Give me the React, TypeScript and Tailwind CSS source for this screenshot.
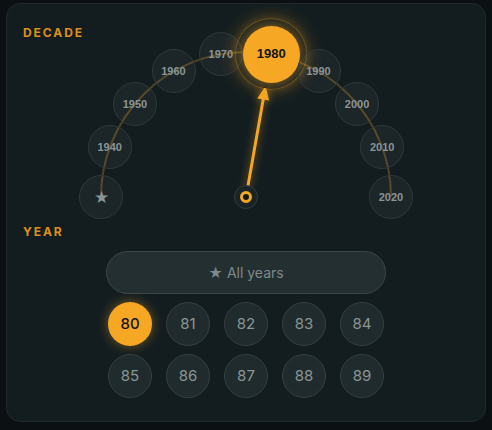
import React from 'react';

const decades = ['★', '1940', '1950', '1960', '1970', '1980', '1990', '2000', '2010', '2020'];
const years = ['80', '81', '82', '83', '84', '85', '86', '87', '88', '89'];

// dial geometry (px, relative to the dial box)
const CX = 240;
const CY = 182;
const R = 145;

function nodePos(i: number) {
  const a = ((180 - i * 20) * Math.PI) / 180;
  return { x: CX + R * Math.cos(a), y: CY - R * Math.sin(a) };
}

function Needle() {
  const a = (80 * Math.PI) / 180;
  const dx = Math.cos(a);
  const dy = -Math.sin(a);
  const px = -dy;
  const py = dx;
  const tip = { x: CX + dx * 113, y: CY + dy * 113 };
  const base = { x: CX + dx * 99, y: CY + dy * 99 };
  const b1 = { x: base.x + px * 6, y: base.y + py * 6 };
  const b2 = { x: base.x - px * 6, y: base.y - py * 6 };
  return (
    <svg className="absolute inset-0 pointer-events-none" width={480} height={207}>
      <path
        d={`M ${CX - R} ${CY} A ${R} ${R} 0 0 1 ${CX + R} ${CY}`}
        fill="none"
        stroke="rgba(245,166,35,0.28)"
        strokeWidth={2}
      />
      <g style={{ filter: 'drop-shadow(0 0 4px rgba(245,166,35,0.6))' }}>
        <line
          x1={CX + dx * 10}
          y1={CY + dy * 10}
          x2={base.x + dx * 1}
          y2={base.y + dy * 1}
          stroke="#f5a623"
          strokeWidth={3}
          strokeLinecap="round"
        />
        <polygon points={`${tip.x},${tip.y} ${b1.x},${b1.y} ${b2.x},${b2.y}`} fill="#f5a623" />
      </g>
      <circle cx={tip.x} cy={tip.y} r={2.5} fill="#1b1b1b" />
    </svg>
  );
}

export default function App() {
  return (
    <div className="min-h-[430px] w-[492px] bg-[#0b1012] pt-[3px] pl-[6px]">
      <div
        className="w-[480px] h-[419px] rounded-[14px] border border-[#1f2a2d] bg-[#131d20] px-[16px] pt-[21px]"
        style={{ fontFamily: 'Inter, "Liberation Sans", sans-serif' }}
      >
        <div className="text-[12px] leading-[16px] font-bold tracking-[0.16em] text-[#dc8f20]">DECADE</div>

        {/* dial */}
        <div className="relative mx-[-17px] mt-[-26px] h-[207px]">
          <Needle />
          {decades.map((d, i) => {
            const p = nodePos(i);
            if (d === '1980') {
              return (
                <div
                  key={d}
                  className="absolute flex items-center justify-center"
                  style={{ left: p.x - 36, top: p.y - 36, width: 72, height: 72 }}
                >
                  <div className="absolute inset-0 rounded-full border border-[#f5a623]/30 bg-[#f5a623]/5 shadow-[0_0_18px_rgba(245,166,35,0.35)]" />
                  <div
                    className="relative flex h-[57px] w-[57px] items-center justify-center rounded-full bg-[#f6a824] text-[13px] font-bold text-[#151515] shadow-[0_0_14px_rgba(245,166,35,0.55)]"
                    style={{ fontFamily: '"Liberation Sans", Arial, sans-serif' }}
                  >
                    1980
                  </div>
                </div>
              );
            }
            return (
              <div
                key={d}
                className="absolute flex h-[44px] w-[44px] items-center justify-center rounded-full border border-[#2e393c] bg-white/[0.04] text-[#8a9597]"
                style={{
                  left: p.x - 22,
                  top: p.y - 22,
                  fontFamily: '"Liberation Sans", Arial, sans-serif',
                }}
              >
                {d === '★' ? (
                  <span className="text-[17px] leading-none">★</span>
                ) : (
                  <span className="text-[11px] font-bold">{d}</span>
                )}
              </div>
            );
          })}
          {/* pivot */}
          <div
            className="absolute flex h-[24px] w-[24px] items-center justify-center rounded-full border border-[#323d40] bg-[#1a2326]"
            style={{ left: CX - 12, top: CY - 12 }}
          >
            <div className="h-[12px] w-[12px] rounded-full border-[3px] border-[#f5a623] bg-[#111819]" />
          </div>
        </div>

        <div className="mt-[2px] text-[12px] leading-[16px] font-bold tracking-[0.16em] text-[#dc8f20]">YEAR</div>

        <div className="mt-[11px] flex justify-center">
          <button className="flex h-[43px] w-[280px] items-center justify-center rounded-full border border-[#3a4648] bg-[#232f31] text-[14px] text-[#7f898b]">
            ★ All years
          </button>
        </div>

        <div className="mt-[8px] flex justify-center">
          <div className="grid grid-cols-5 gap-x-[14px] gap-y-[8px]">
            {years.map((y) =>
              y === '80' ? (
                <div
                  key={y}
                  className="flex h-[44px] w-[44px] items-center justify-center rounded-full bg-[#f6a824] text-[15px] font-medium text-[#111] shadow-[0_0_12px_rgba(245,166,35,0.45)]"
                >
                  {y}
                </div>
              ) : (
                <div
                  key={y}
                  className="flex h-[44px] w-[44px] items-center justify-center rounded-full border border-[#354043] bg-[#202b2d] text-[15px] text-[#8a9597]"
                >
                  {y}
                </div>
              )
            )}
          </div>
        </div>
      </div>
    </div>
  );
}
